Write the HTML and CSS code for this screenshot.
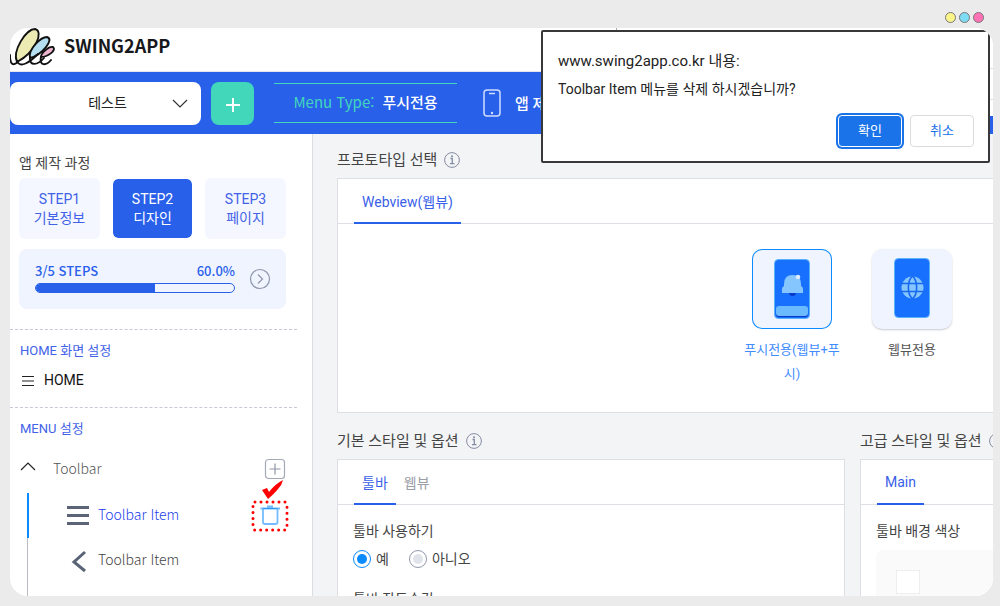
FILE: index.html
```html
<!DOCTYPE html>
<html lang="ko">
<head>
<meta charset="utf-8">
<title>SWING2APP</title>
<link rel="stylesheet" href="styles.css">
</head>
<body>
<div class="lights"><span class="light yellow"></span><span class="light blue"></span><span class="light pink"></span></div>
<div class="window">
  <header class="brand">
    <svg class="logo" width="46" height="40" viewBox="0 0 46 40" aria-hidden="true">
      <g stroke="#111" stroke-width="1.9" stroke-linecap="round" stroke-linejoin="round">
        <path fill="#ecebb4" d="M7 34C2 23 16 1 25 1C34 3 26 24 7 34Z"/>
        <path fill="#b5dff0" d="M20 30C18 21 31 9 37 9C45 11 32 27 20 30Z"/>
        <path fill="#edb5d0" d="M31 29C31 25 39 18 43 19C47 22 38 29 31 29Z"/>
        <path fill="none" d="M0 27C0 37 3 38 8 34M7 33C10 41 20 34 28 26M20 29C19 39 28 37 34 30M31 29C29 38 36 38 41 32"/>
      </g>
    </svg>
    <strong class="brand-name">SWING2APP</strong>
  </header>
  <div class="toolbar">
    <div class="select-wrap">
      <select class="app-select" aria-label="앱 선택"><option>테스트</option></select>
      <svg class="chevron" width="16" height="10" viewBox="0 0 16 10" aria-hidden="true"><path d="M1 1l7 7 7-7" fill="none" stroke="#333" stroke-width="1.2"/></svg>
    </div>
    <button class="add-app" aria-label="앱 추가"><svg width="16" height="16" viewBox="0 0 16 16"><path d="M8 1v14M1 8h14" stroke="#fff" stroke-width="2"/></svg></button>
    <div class="menu-type"><span>Menu Type:</span><b>푸시전용</b></div>
    <button class="phone-link">
      <svg width="18" height="28" viewBox="0 0 18 28"><rect x="1" y="1" width="16" height="26" rx="3" fill="none" stroke="#cfdcff" stroke-width="1.5"/><path d="M6 4.500h6" stroke="#cfdcff" stroke-width="1.5"/><circle cx="9" cy="24" r="1.2" fill="#cfdcff"/></svg>
      <span>앱 제작</span>
    </button>
  </div>
  <div class="content">
    <nav class="sidebar">
      <section class="progress-section">
        <h2 class="side-title">앱 제작 과정</h2>
        <div class="steps">
          <button class="step">STEP1<br>기본정보</button>
          <button class="step active">STEP2<br>디자인</button>
          <button class="step">STEP3<br>페이지</button>
        </div>
        <div class="progress-card">
          <div class="progress-info">
            <div class="progress-labels"><span>3/5 STEPS</span><span>60.0%</span></div>
            <div class="bar"><div class="bar-fill" style="width:60%"></div></div>
          </div>
          <button class="plain" aria-label="다음"><svg width="22" height="22" viewBox="0 0 22 22"><circle cx="11" cy="11" r="9.500" fill="none" stroke="#8f96ab" stroke-width="1.2"/><path d="M9 6.500l4.500 4.500L9 15.500" fill="none" stroke="#8f96ab" stroke-width="1.2"/></svg></button>
        </div>
      </section>
      <section class="home-section">
        <h3 class="group-title">HOME 화면 설정</h3>
        <a class="home-link" href="#home"><svg width="12" height="12" viewBox="0 0 12 12" shape-rendering="crispEdges"><path d="M0 1.500h12M0 10.500h12" stroke="#222"/><path d="M0 6h12" stroke="#909090" stroke-width="2"/></svg>HOME</a>
      </section>
      <section class="menu-section">
        <h3 class="group-title">MENU 설정</h3>
        <div class="menu-head">
          <svg class="fold" width="16" height="16" viewBox="0 0 16 16"><path d="M1 9l7-7 7 7" fill="none" stroke="#222" stroke-width="1.2"/></svg>
          <span class="menu-name">Toolbar</span>
          <button class="plain" aria-label="메뉴 추가"><svg width="22" height="22" viewBox="0 0 22 22"><rect x="1.500" y="1.500" width="19" height="19" rx="3" fill="none" stroke="#a4a9b8" stroke-width="1.2"/><path d="M11 5.500v11M5.500 11h11" stroke="#8f96a8" stroke-width="1.2"/></svg></button>
        </div>
        <ul class="menu-list">
          <li class="menu-item active">
            <svg class="item-icon" width="22" height="22" viewBox="0 0 22 22"><path d="M0 2.500h22M0 10.500h22M0 18.500h22" stroke="#5b6377" stroke-width="3"/></svg>
            <a href="#item1">Toolbar Item</a>
            <button class="trash" aria-label="삭제">
              <svg width="38" height="32" viewBox="0 0 38 32"><rect x="2" y="2" width="34" height="28" rx="2" fill="none" stroke="#f00" stroke-width="3" stroke-linecap="round" stroke-dasharray="0 6"/><path d="M9.500 8.500h19.500M16 6.500h6" stroke="#74bcff" stroke-width="2"/><path d="M12 8.500v13.500q0 2 2 2h10.500q2 0 2-2V8.500" fill="none" stroke="#74bcff" stroke-width="1.800"/><path d="M12 8.500h14.500" stroke="#2b98f5"/></svg>
              <svg class="check" width="22" height="20" viewBox="0 0 22 20"><path fill="#f00" d="M0 10L5 8L7 12Q13 4 21 0Q20 5 16 9Q13 13 6 19Z"/></svg>
            </button>
          </li>
          <li class="menu-item">
            <svg class="item-icon" width="22" height="24" viewBox="0 0 22 24"><path d="M18 3L7 13l11 9" fill="none" stroke="#5b6377" stroke-width="3"/></svg>
            <a href="#item2">Toolbar Item</a>
          </li>
          <li class="menu-item"></li>
        </ul>
      </section>
    </nav>
    <main class="main">
      <section>
        <h2 class="section-title">프로토타입 선택 <svg class="info" width="16" height="16" viewBox="0 0 16 16"><circle cx="8" cy="8" r="7.400" fill="none" stroke="#858ca3"/><path d="M6.500 6.500H8.300v5M6 11.700h4.500" fill="none" stroke="#858ca3" stroke-width="1.300"/><circle cx="8" cy="4.300" r="1" fill="#858ca3"/></svg></h2>
        <div class="card">
          <div class="tabs"><button class="tab active">Webview(웹뷰)</button></div>
          <div class="options">
            <button class="option selected">
              <span class="tile"><svg width="80" height="80" viewBox="0 0 80 80"><rect x="22.500" y="10.500" width="35" height="59" rx="4" fill="#1870ff" stroke="#5bb2fb"/><path fill="#0a38c8" d="M37 43h7q0 4-3.500 4T37 43ZM24 62h32v3q0 3-3 3H27q-3 0-3-3Z"/><path fill="#85c6ff" d="M30 44v-4q0-2 2-3v-2q0-9 8.500-9t8.500 9v2q2 1 2 3v4Z"/><circle cx="46" cy="28" r="2.300" fill="#dcebff"/><rect x="24" y="57" width="32" height="10" rx="3" fill="#6bb9ff"/></svg></span>
              <span class="option-name">푸시전용(웹뷰+푸시)</span>
            </button>
            <button class="option">
              <span class="tile"><svg width="80" height="80" viewBox="0 0 80 80"><rect x="22.500" y="9.500" width="35" height="59" rx="4" fill="#1870ff" stroke="#5bb2fb"/><circle cx="40.500" cy="38.500" r="11" fill="#85c6ff"/><path d="M29 34.500h23M29 42.500h23M40.500 27c-5.500 5-5.500 18 0 23M40.500 27c5.500 5 5.500 18 0 23" fill="none" stroke="#1668f0" stroke-width="1.600"/></svg></span>
              <span class="option-name">웹뷰전용</span>
            </button>
          </div>
        </div>
      </section>
      <div class="columns">
        <section>
          <h2 class="section-title">기본 스타일 및 옵션 <svg class="info" width="16" height="16" viewBox="0 0 16 16"><circle cx="8" cy="8" r="7.400" fill="none" stroke="#858ca3"/><path d="M6.500 6.500H8.300v5M6 11.700h4.500" fill="none" stroke="#858ca3" stroke-width="1.300"/><circle cx="8" cy="4.300" r="1" fill="#858ca3"/></svg></h2>
          <div class="card">
            <div class="tabs"><button class="tab active">툴바</button><button class="tab">웹뷰</button></div>
            <div class="fields">
              <fieldset class="field">
                <legend>툴바 사용하기</legend>
                <div class="radios">
                  <label><input type="radio" name="use" checked>예</label>
                  <label><input type="radio" name="use">아니오</label>
                </div>
              </fieldset>
              <h3 class="field-title">툴바 작동숨김</h3>
            </div>
          </div>
        </section>
        <section>
          <h2 class="section-title">고급 스타일 및 옵션 <svg class="info" width="16" height="16" viewBox="0 0 16 16"><circle cx="8" cy="8" r="7.400" fill="none" stroke="#858ca3"/></svg></h2>
          <div class="card">
            <div class="tabs"><button class="tab active">Main</button></div>
            <div class="fields">
              <h3 class="field-title">툴바 배경 색상</h3>
              <div class="swatches"><button class="swatch" aria-label="흰색"></button></div>
            </div>
          </div>
        </section>
      </div>
    </main>
  </div>
  <div class="browser-bar"><div class="browser-row"></div></div>
  <div class="dialog" role="alertdialog" aria-labelledby="dlg-title">
    <h1 class="dialog-title" id="dlg-title">www.swing2app.co.kr 내용:</h1>
    <p class="dialog-text">Toolbar Item 메뉴를 삭제 하시겠습니까?</p>
    <div class="dialog-actions"><button class="btn ok">확인</button><button class="btn cancel">취소</button></div>
  </div>
</div>
</body>
</html>
```

FILE: styles.css
```css
* { box-sizing: border-box; }
body {
  margin: 0;
  height: 100vh;
  padding: 28px 7px 10px 10px;
  background: #ebebeb;
  font-family: Roboto, "Noto Sans CJK KR", sans-serif;
  font-size: 14px;
  color: #444;
  overflow: hidden;
}
h1, h2, h3, p, ul { margin: 0; padding: 0; font-weight: 400; }
button { font: inherit; color: inherit; border: 0; padding: 0; background: none; }
a { color: inherit; text-decoration: none; }
svg { display: block; flex: none; }
.plain { flex: none; }

.lights { position: absolute; top: 12px; right: 16px; display: flex; gap: 3px; }
.light { width: 11px; height: 11px; border: 1px solid #777; border-radius: 50%; }
.yellow { background: #fbf58a; }
.blue { background: #7fdcf5; }
.pink { background: #ff72b6; }

.window {
  position: relative;
  height: 100%;
  display: flex;
  flex-direction: column;
  background: #fff;
  border-radius: 18px;
  overflow: hidden;
}
.brand {
  display: flex;
  flex: none;
  gap: 8px;
  height: 44px;
  border-bottom: 1px solid #e4e6ee;
}
.brand-name { font: 700 18px/34px "Noto Sans CJK KR", sans-serif; color: #17181c; }

.toolbar {
  flex: none;
  display: flex;
  align-items: center;
  height: 62px;
  background: #2860ea;
  color: #fff;
}
.select-wrap { position: relative; width: 191px; height: 43px; }
.app-select {
  appearance: none;
  width: 100%;
  height: 100%;
  border: 0;
  border-radius: 8px;
  background: #fff;
  padding: 0 0 2px 4px;
  font: 14px "Noto Sans CJK KR", sans-serif;
  color: #222;
  text-align-last: center;
}
.chevron { position: absolute; right: 13px; top: 17px; }
.add-app {
  width: 43px;
  height: 43px;
  padding-top: 3px;
  margin-left: 10px;
  display: flex;
  align-items: center;
  justify-content: center;
  border-radius: 8px;
  background: #42d6bb;
}
.menu-type {
  display: flex;
  justify-content: center;
  gap: 8px;
  width: 183px;
  height: 40px;
  margin-left: 20px;
  border: 1px solid #42d6bb;
  border-width: 1px 0;
  font: 15px/36px "Noto Sans CJK KR", sans-serif;
  color: #42d6bb;
}
.menu-type b { color: #fff; font-weight: 500; }
.phone-link { display: flex; align-items: center; gap: 14px; margin-left: 26px; font-size: 15px; font-weight: 500; white-space: nowrap; }
.phone-link span { padding-bottom: 2px; }

.content { flex: 1; min-height: 0; display: flex; }
.sidebar { flex: none; width: 303px; border-right: 1px solid #dcdde1; overflow: hidden; }
.progress-section { padding: 19px 26px 20px 9px; }
.side-title { font-size: 14px; line-height: 20px; }
.steps { display: grid; grid-template-columns: repeat(3, 1fr); gap: 12px; margin-top: 5px; }
.step {
  height: 61px;
  border-radius: 6px;
  background: #f4f7ff;
  color: #4262e8;
  line-height: 19px;
}
.step.active { background: #2860ea padding-box; border: 1px solid #fff; color: #fff; }
.progress-card {
  display: flex;
  align-items: center;
  gap: 14px;
  height: 60px;
  margin-top: 10px;
  padding: 0 15px 0 16px;
  border-radius: 8px;
  background: #f0f4ff;
}
.progress-info { flex: 1; margin-top: -4px; }
.progress-labels { display: flex; justify-content: space-between; margin-bottom: 2px; font: 500 13px/20px "Noto Sans CJK KR", sans-serif; color: #2860ea; }
.bar { height: 10px; border: 1px solid #2860ea; border-radius: 5px; overflow: hidden; }
.bar-fill { height: 100%; background: #2860ea; }

.home-section, .menu-section { width: 287px; padding: 11px 11px 14px 10px; border-top: 1px dashed #c9c8d8; }
.group-title { font-size: 13px; line-height: 20px; color: #4262e8; }
.home-link { display: flex; align-items: center; gap: 10px; margin-top: 7px; padding-left: 2px; line-height: 25px; font-size: 14px; color: #111; }
.menu-head { display: flex; align-items: center; height: 49px; margin-top: 5px; color: #555; }
.menu-name { flex: 1; margin-left: 17px; padding-bottom: 2px; font: 300 14px/20px "Noto Sans CJK KR", sans-serif; }
.menu-list { list-style: none; margin-left: 7px; }
.menu-item {
  display: flex;
  align-items: center;
  height: 45px;
  padding-left: 39px;
  border-left: 1px solid #b9bbc4;
  color: #444;
  font: 300 14px/20px "Noto Sans CJK KR", sans-serif;
}
.menu-item a { flex: 1; margin-left: 9px; padding-bottom: 3px; }
.menu-item.active { border-left: 2px solid #0a8bff; padding-left: 38px; color: #2040ea; }
.trash { position: relative; margin-right: -3px; }
.check { position: absolute; left: 11px; top: -20px; }

.main { flex: 1; min-width: 0; padding: 14px 0 0 24px; background: #f3f4f6; overflow: hidden; }
.main > * { width: 1030px; }
.section-title { display: flex; align-items: center; gap: 7px; line-height: 24px; margin-bottom: 6px; font-size: 15px; }
.card { background: #fff; border: 1px solid #dedfe4; }
.tabs { display: flex; height: 45px; padding-left: 16px; border-bottom: 1px solid #dedfe4; }
.tab { padding: 0 8px; height: 45px; color: #9a9da8; border-bottom: 2px solid transparent; }
.tab.active { color: #3a5fe8; border-bottom-color: #2860ea; }
.options { display: flex; justify-content: center; gap: 24px; height: 188px; padding-top: 25px; }
.option { width: 96px; display: flex; flex-direction: column; align-items: center; gap: 9px; font-size: 13px; line-height: 24px; color: #555; }
.tile { width: 80px; height: 80px; border-radius: 10px; background: #f0f4ff; box-shadow: 0 1px 2px #c8cbd2; }
.option.selected { color: #3f8cff; }
.selected .tile { box-shadow: inset 0 0 0 1px #0a8bff; }
.columns { display: grid; grid-template-columns: 508px 1fr; gap: 15px; margin-top: 16px; }
.fields { padding: 14px 15px; min-height: 150px; }
.field { border: 0; margin: 0; padding: 0; }
.field legend, .field-title { padding: 0; line-height: 24px; font-size: 14px; }
.radios { display: flex; gap: 20px; margin: 5px 0 17px; }
.radios label { display: flex; align-items: center; gap: 5px; line-height: 22px; }
.radios input {
  appearance: none;
  width: 18px;
  height: 18px;
  margin: 0;
  padding: 3px;
  border: 1px solid #9297ac;
  border-radius: 50%;
  background: #e0e3ea;
  background-clip: content-box;
}
.radios input:checked { border-color: #0a8bff; background-color: #0a8bff; }
.swatches { margin-top: 7px; padding: 20px; height: 80px; border-radius: 8px; background: #fafafa; }
.swatch { width: 24px; height: 24px; border: 1px solid #eee; background: #fff; display: block; }

.browser-bar { position: absolute; top: 0; right: 0; width: 377px; height: 88px; padding-top: 40px; background: #fff; border-left: 1px solid #aaa; }
.browser-row { height: 32px; border: 1px solid #dedfe4; border-width: 1px 0; }
.dialog {
  position: absolute;
  top: 2px;
  right: 3px;
  width: 449px;
  padding: 18px 14px 13px 15px;
  background: #fff;
  border: 2px solid #38383b;
  border-radius: 2px;
  color: #222;
}
.dialog-title { font-size: 15px; line-height: 22px; }
.dialog-text { font-size: 14px; line-height: 20px; margin-top: 7px; }
.dialog-actions { display: flex; justify-content: flex-end; gap: 8px; margin-top: 15px; }
.btn { width: 64px; height: 32px; border-radius: 4px; font-size: 13px; line-height: 28px; margin: 1px 0; }
.ok { background: #1a73e8; color: #fff; border: 1px solid #fff; box-shadow: 0 0 0 2px #1a73e8; }
.cancel { border: 1px solid #dadce0; color: #1a73e8; }
```
